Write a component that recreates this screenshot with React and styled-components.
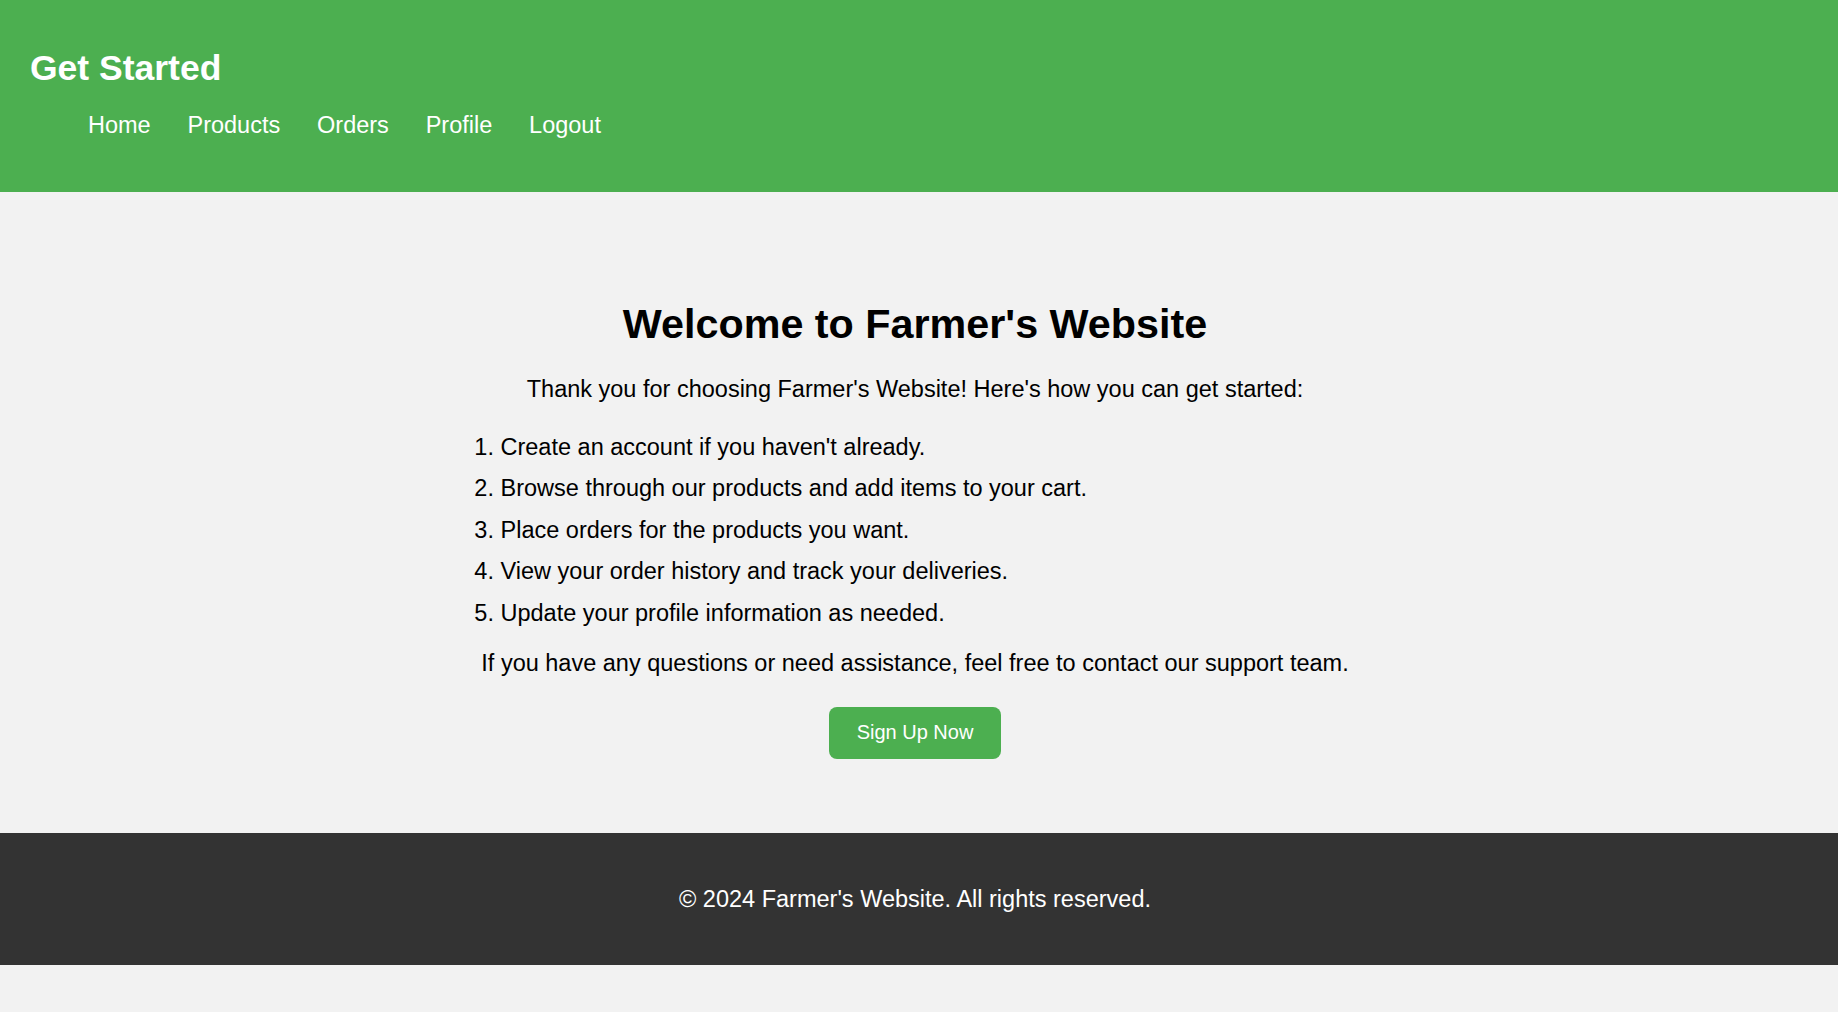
import React from 'react';
import styled, { createGlobalStyle } from 'styled-components';

const GlobalStyle = createGlobalStyle`
  body {
    margin: 0;
    background-color: #f2f2f2;
    font-family: "Liberation Sans", Arial, sans-serif;
    color: #000;
  }
`;

const Header = styled.header`
  background-color: #4caf50;
  color: #fff;
  padding: 48px 29px 52.5px 30px;
`;

const SiteTitle = styled.h1`
  margin: 0;
  font-size: 35.5px;
  line-height: 1.15;
  font-weight: 700;
`;

const NavList = styled.ul`
  display: flex;
  gap: 36.8px;
  list-style: none;
  margin: 23.5px 0 0;
  padding: 0 0 0 58px;
`;

const NavLink = styled.a`
  color: #fff;
  text-decoration: none;
  font-size: 23.5px;
  line-height: 27px;
`;

const Main = styled.main`
  padding: 108.7px 8px 74px 0;
`;

const Content = styled.section`
  width: 881px;
  margin: 0 auto;
  text-align: center;
`;

const Heading = styled.h2`
  margin: 0 0 28px;
  font-size: 41.3px;
  line-height: 1.15;
  font-weight: 700;
`;

const Text = styled.p`
  margin: 0 0 ${({ $gap }) => $gap}px;
  font-size: 23.5px;
  line-height: 27px;
`;

const Steps = styled.ol`
  margin: 0 0 22.8px;
  padding: 0 0 0 26px;
  text-align: left;
  font-size: 23.5px;
  line-height: 27px;
`;

const Step = styled.li`
  margin-bottom: 14.6px;

  &:last-child {
    margin-bottom: 0;
  }
`;

const SignUpButton = styled.button`
  background-color: #4caf50;
  color: #fff;
  border: none;
  border-radius: 8px;
  padding: 14.6px 28px;
  font-family: inherit;
  font-size: 20px;
  line-height: 23px;
  cursor: pointer;
`;

const Footer = styled.footer`
  background-color: #333;
  color: #fff;
  text-align: center;
  padding: 52.7px 8px 52.7px 0;
`;

const FooterText = styled.p`
  margin: 0;
  font-size: 23.5px;
  line-height: 27px;
`;

const navItems = ['Home', 'Products', 'Orders', 'Profile', 'Logout'];

const steps = [
  "Create an account if you haven't already.",
  'Browse through our products and add items to your cart.',
  'Place orders for the products you want.',
  'View your order history and track your deliveries.',
  'Update your profile information as needed.',
];

const App = () => {
  return (
    <>
      <GlobalStyle />
      <Header>
        <SiteTitle>Get Started</SiteTitle>
        <nav>
          <NavList>
            {navItems.map((item) => (
              <li key={item}>
                <NavLink href="#">{item}</NavLink>
              </li>
            ))}
          </NavList>
        </nav>
      </Header>
      <Main>
        <Content>
          <Heading>Welcome to Farmer's Website</Heading>
          <Text $gap={30.6}>
            Thank you for choosing Farmer's Website! Here's how you can get started:
          </Text>
          <Steps>
            {steps.map((step) => (
              <Step key={step}>{step}</Step>
            ))}
          </Steps>
          <Text $gap={30}>
            If you have any questions or need assistance, feel free to contact our support team.
          </Text>
          <SignUpButton>Sign Up Now</SignUpButton>
        </Content>
      </Main>
      <Footer>
        <FooterText>© 2024 Farmer's Website. All rights reserved.</FooterText>
      </Footer>
    </>
  );
};

export default App;
